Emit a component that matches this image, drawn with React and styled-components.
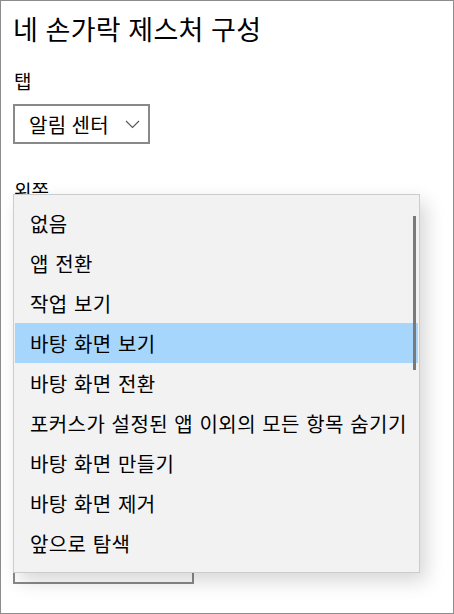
import React from "react";
import styled, { createGlobalStyle } from "styled-components";

const GlobalStyle = createGlobalStyle`
  html, body {
    margin: 0;
    padding: 0;
    background: #ffffff;
  }
  body {
    font-family: "Noto Sans CJK KR", "Noto Sans", sans-serif;
    color: #000;
  }
`;

const Window = styled.div`
  position: relative;
  box-sizing: border-box;
  width: 454px;
  height: 614px;
  border: 1px solid #8c8c8c;
  padding: 10px 12px 0 12px;
  overflow: hidden;
  background: #fff;
`;

const Title = styled.h1`
  margin: 0;
  font-size: 27px;
  font-weight: 400;
  line-height: 36px;
  letter-spacing: 0.3px;
  word-spacing: 1px;
`;

const Section = styled.div`
  display: flex;
  flex-direction: column;
  align-items: flex-start;
  margin-top: ${(p) => p.$top}px;
`;

const Label = styled.div`
  font-size: 19px;
  line-height: 28px;
  margin: 0 0 9px 1px;
`;

const Combo = styled.div`
  box-sizing: border-box;
  display: flex;
  align-items: center;
  gap: 16px;
  width: ${(p) => p.$width}px;
  height: 40px;
  border: 2px solid #898989;
  padding: 0 0 0 14px;
  font-size: 20px;
  letter-spacing: 0.4px;
  white-space: nowrap;
  overflow: hidden;
  background: #fff;

  svg {
    flex-shrink: 0;
  }
`;

const Popup = styled.div`
  position: absolute;
  left: 12px;
  top: 193px;
  width: 407px;
  box-sizing: border-box;
  padding: 8px 1px 9px 1px;
  background: #f2f2f2;
  border: 1px solid #cccccc;
  box-shadow: 6px 8px 18px rgba(0, 0, 0, 0.16);
`;

const Option = styled.div`
  height: 40px;
  display: flex;
  align-items: center;
  padding-left: 15px;
  font-size: 20px;
  letter-spacing: 0.4px;
  word-spacing: 1.5px;
  white-space: nowrap;
  background: ${(p) => (p.$selected ? "#a7d6fc" : "transparent")};
`;

const Scrollbar = styled.div`
  position: absolute;
  right: 3px;
  top: 21px;
  width: 3px;
  height: 154px;
  background: #7a7a7a;
`;

const Chevron = () => (
  <svg width="15" height="9" viewBox="0 0 15 9">
    <path d="M1 1 L7.5 7.5 L14 1" fill="none" stroke="#555" strokeWidth="1.1" />
  </svg>
);

const options = [
  "없음",
  "앱 전환",
  "작업 보기",
  "바탕 화면 보기",
  "바탕 화면 전환",
  "포커스가 설정된 앱 이외의 모든 항목 숨기기",
  "바탕 화면 만들기",
  "바탕 화면 제거",
  "앞으로 탐색",
];

// combos hidden under the open list keep no text
const sections = [
  { label: "왼쪽", width: 180 },
  { label: "오른쪽", width: 180 },
  { label: "위쪽", width: 180 },
  { label: "아래쪽", width: 181 },
];

const App = () => {
  return (
    <>
      <GlobalStyle />
      <Window>
        <Title>네 손가락 제스처 구성</Title>
        <Section $top={20}>
          <Label>탭</Label>
          <Combo $width={137}>
            <span>알림 센터</span>
            <Chevron />
          </Combo>
        </Section>
        {sections.map((s, i) => (
          <Section key={s.label} $top={33}>
            {i === 0 ? <Label>{s.label}</Label> : <Label aria-hidden>&nbsp;</Label>}
            <Combo $width={s.width} />
          </Section>
        ))}
        <Popup>
          {options.map((o) => (
            <Option key={o} $selected={o === "바탕 화면 보기"}>
              {o}
            </Option>
          ))}
          <Scrollbar />
        </Popup>
      </Window>
    </>
  );
};

export default App;
